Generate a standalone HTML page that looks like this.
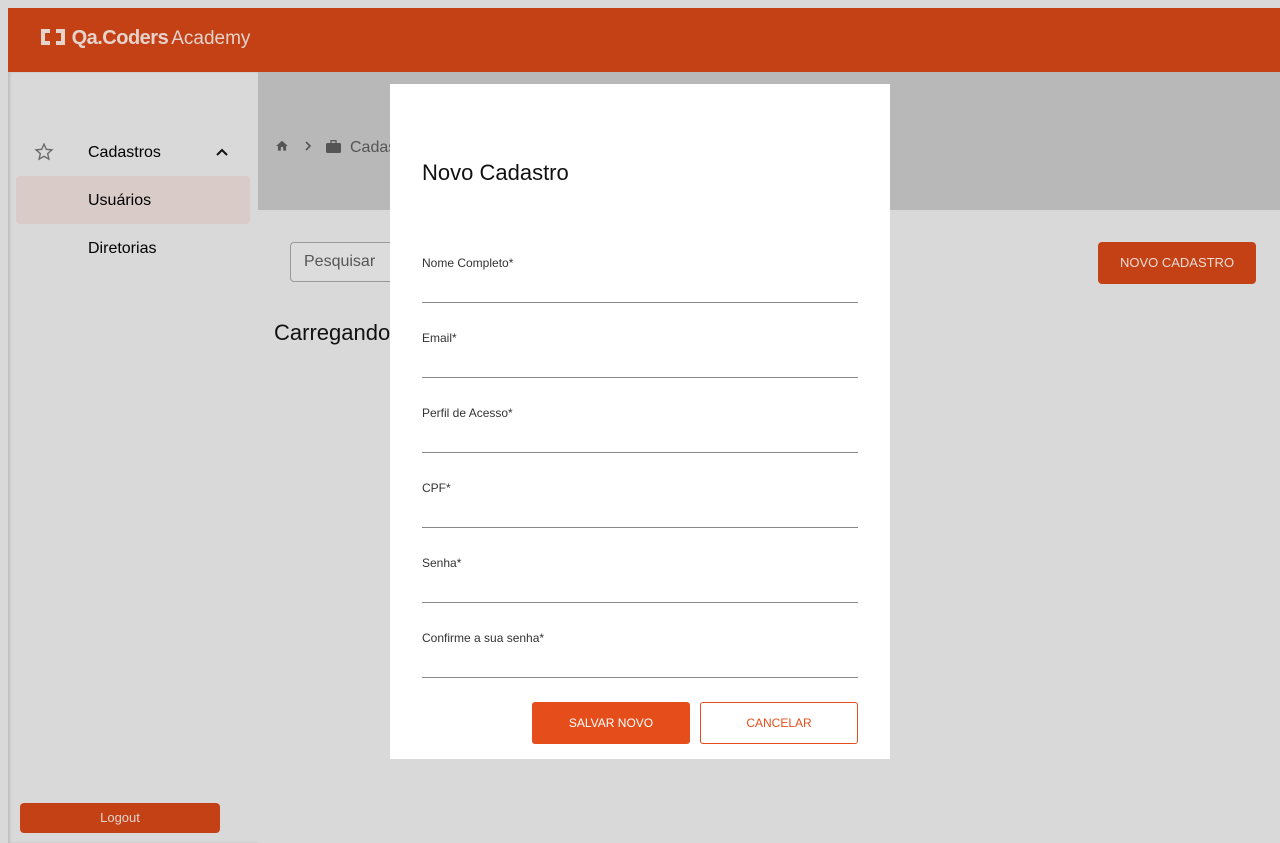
<!DOCTYPE html>
<html><head><style>
*{margin:0;padding:0;box-sizing:border-box}
body{width:1280px;height:843px;background:#d9d9d9;font-family:"Liberation Sans",Roboto,sans-serif;position:relative;overflow:hidden}
.hdr{position:absolute;left:8px;top:8px;right:0;height:64px;background:#c44115}
.logo{position:absolute;left:32px;top:19px;color:#e6d3cc;font-size:20px;white-space:nowrap}
.side{position:absolute;left:8px;top:72px;width:250px;bottom:0;background:#d9d9d9;box-shadow:inset 2px 0 2px rgba(0,0,0,.12)}
.bc{position:absolute;left:258px;top:72px;right:0;height:138px;background:#b8b8b8}
.t{position:absolute;white-space:nowrap}
.modal{position:absolute;left:390px;top:84px;width:500px;height:675px;background:#fff}
.lab{position:absolute;left:32px;font-size:12px;color:#333}
.line{position:absolute;left:32px;width:436px;height:1px;background:#888}
</style></head><body>
<div class="hdr"><div class="logo">
<svg style="vertical-align:-2px" width="26" height="18" viewBox="0 0 26 18"><path d="M1 1h9v4H5v8h5v4H1z M25 1h-9v4h5v8h-5v4h9z" fill="#e6d3cc"/></svg>
<span style="font-weight:bold;letter-spacing:-0.5px">Qa.Coders</span><span style="font-size:19px;margin-left:3px">Academy</span></div></div>
<div class="side">
<svg class="t" style="left:26px;top:70px" width="20" height="20" viewBox="0 0 24 24"><path d="M12 2.5l2.8 6.3 6.7.6-5.1 4.5 1.5 6.7L12 17.1l-5.9 3.5 1.5-6.7-5.1-4.5 6.7-.6z" fill="none" stroke="#666" stroke-width="1.6"/></svg>
<div class="t" style="left:80px;top:72px;font-size:16px">Cadastros</div>
<svg class="t" style="left:206px;top:72px" width="16" height="16" viewBox="0 0 16 16"><path d="M3 11l5-5 5 5" fill="none" stroke="#111" stroke-width="2"/></svg>
<div class="t" style="left:8px;top:104px;width:234px;height:48px;background:#d9cbc7;border-radius:4px"></div>
<div class="t" style="left:80px;top:120px;font-size:16px">Usuários</div>
<div class="t" style="left:80px;top:168px;font-size:16px">Diretorias</div>
<div class="t" style="left:12px;top:731px;width:200px;height:30px;background:#c44115;border-radius:4px;color:#e6d3cc;font-size:13px;text-align:center;line-height:30px">Logout</div>
</div>
<div class="bc">
<svg class="t" style="left:17px;top:67px" width="14" height="14" viewBox="0 0 24 24"><path d="M10 20v-6h4v6h5v-8h3L12 3 2 12h3v8z" fill="#555"/></svg>
<svg class="t" style="left:44px;top:68px" width="12" height="12" viewBox="0 0 12 12"><path d="M4 2l4 4-4 4" fill="none" stroke="#555" stroke-width="1.6"/></svg>
<svg class="t" style="left:68px;top:68px" width="15" height="13" viewBox="0 0 15 13"><rect x="0" y="3" width="15" height="10" rx="1.5" fill="#555"/><rect x="5" y="0.7" width="5" height="3" fill="none" stroke="#555" stroke-width="1.3"/></svg>
<div class="t" style="left:92px;top:67px;font-size:16px;color:#555">Cadastros</div>
</div>
<div class="t" style="left:290px;top:242px;width:120px;height:40px;border:1px solid #999;border-radius:4px;background:#dcdcdc;padding:10px 13px;font-size:16px;color:#555">Pesquisar</div>
<div class="t" style="left:274px;top:320px;font-size:22px;color:#111;font-weight:500">Carregando</div>
<div class="t" style="left:1098px;top:242px;width:158px;height:42px;background:#c44115;border-radius:4px;color:#f0dcd4;font-size:13px;text-align:center;line-height:42px">NOVO CADASTRO</div>
<div class="modal">
<div class="t" style="left:32px;top:76px;font-size:22px;color:#111">Novo Cadastro</div>
<div class="lab" style="top:172px">Nome Completo*</div><div class="line" style="top:218px"></div>
<div class="lab" style="top:247px">Email*</div><div class="line" style="top:293px"></div>
<div class="lab" style="top:322px">Perfil de Acesso*</div><div class="line" style="top:368px"></div>
<div class="lab" style="top:397px">CPF*</div><div class="line" style="top:443px"></div>
<div class="lab" style="top:472px">Senha*</div><div class="line" style="top:518px"></div>
<div class="lab" style="top:547px">Confirme a sua senha*</div><div class="line" style="top:593px"></div>
<div class="t" style="left:142px;top:618px;width:158px;height:42px;background:#e54e1b;border-radius:3px;color:#fff;font-size:12px;text-align:center;line-height:42px">SALVAR NOVO</div>
<div class="t" style="left:310px;top:618px;width:158px;height:42px;border:1px solid #e54e1b;border-radius:3px;color:#e54e1b;font-size:12px;text-align:center;line-height:40px">CANCELAR</div>
</div>
</body></html>
